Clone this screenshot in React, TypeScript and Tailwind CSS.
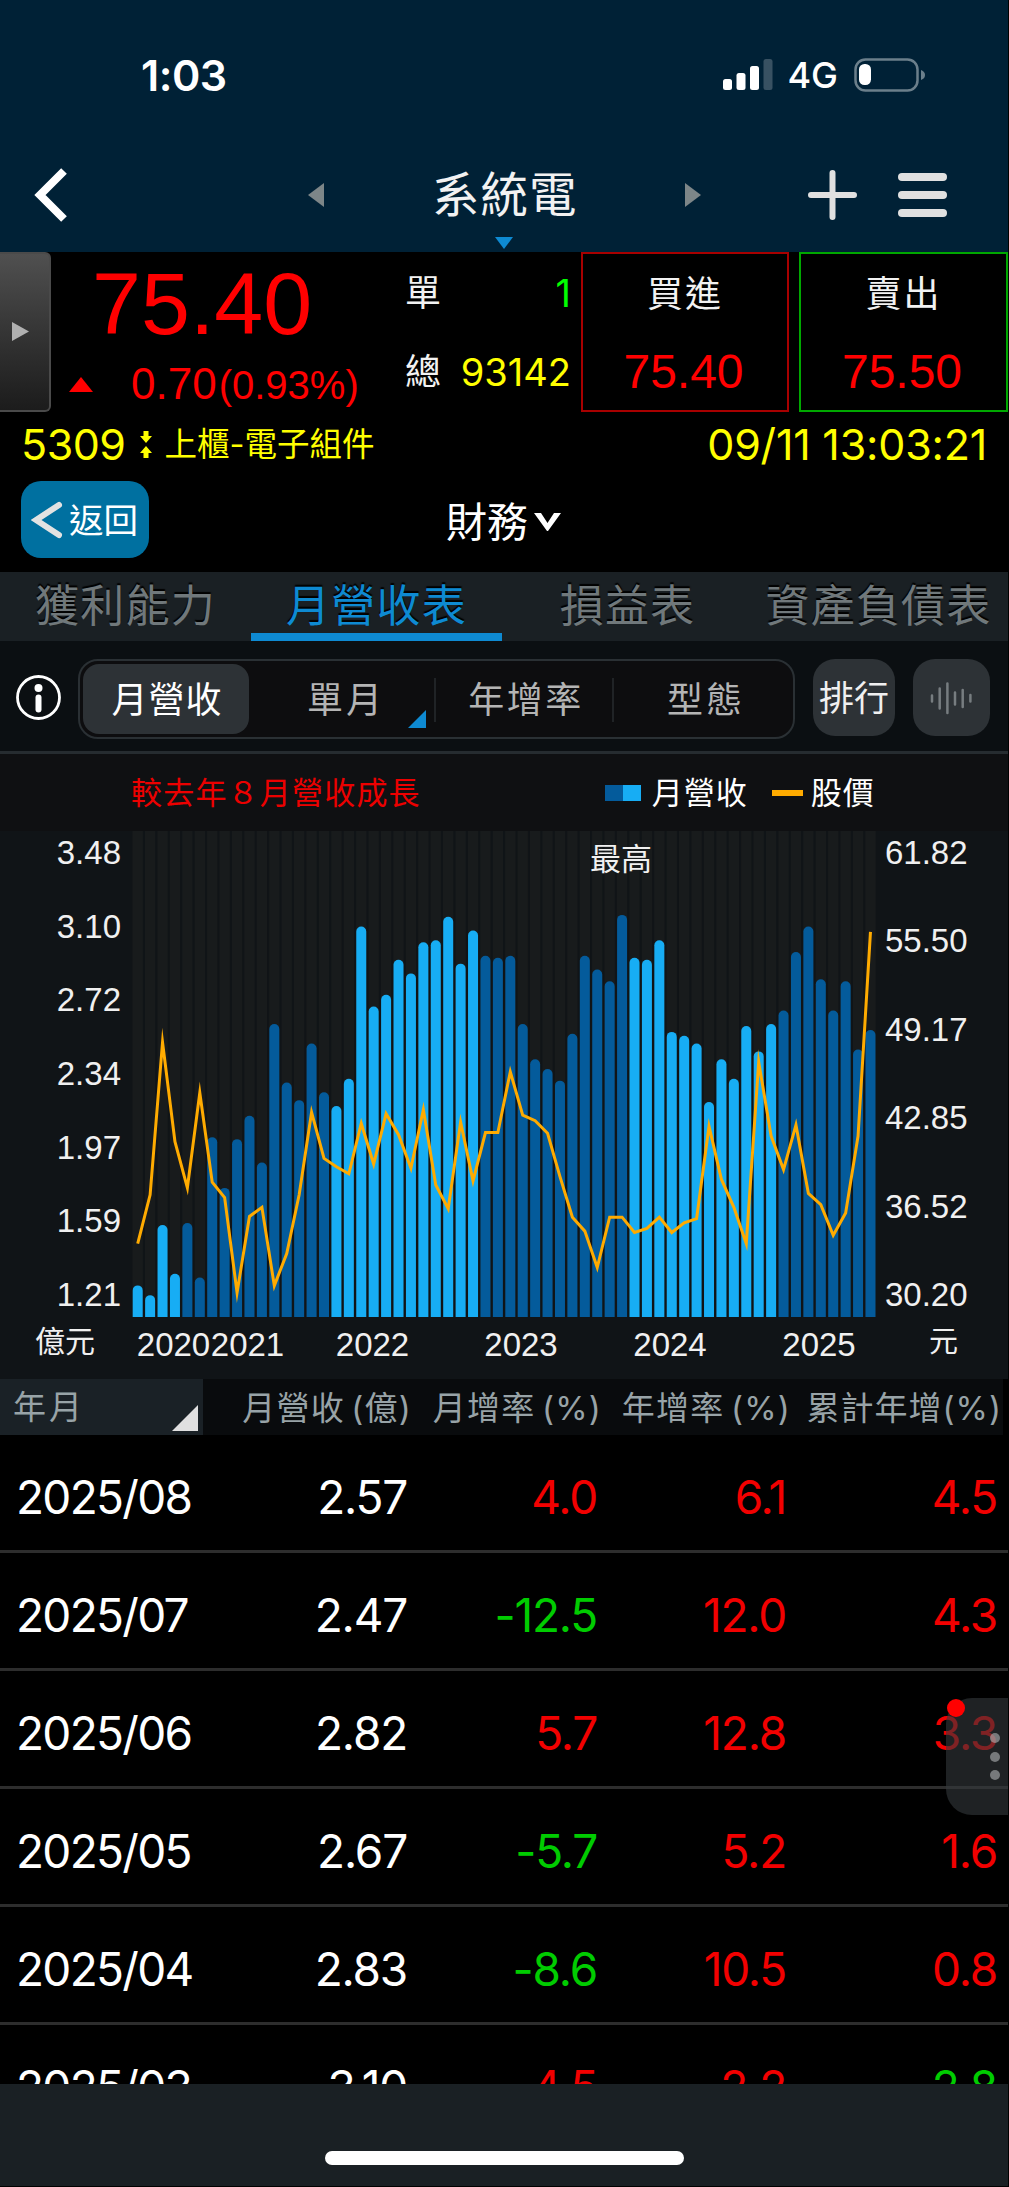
import type { ReactNode } from "react";
import clsx from "clsx";

const FIRST_YEAR_MONTH = 9; // la serie empieza en 2020/09
const REVENUE = [
  1.26, 1.21, 1.57, 1.32, 1.58, 1.3, 2.02, 1.76, 2.01, 2.13, 1.89, 2.6, 2.3, 2.21, 2.5, 2.25, 2.18,
  2.32, 3.1, 2.69, 2.75, 2.93, 2.86, 3.02, 3.03, 3.15, 2.91, 3.08, 2.95, 2.94, 2.95, 2.6, 2.42,
  2.37, 2.31, 2.55, 2.95, 2.88, 2.82, 3.16, 2.94, 2.93, 3.03, 2.56, 2.54, 2.5, 2.2, 2.42, 2.32,
  2.59, 2.46, 2.6, 2.67, 2.97, 3.1, 2.83, 2.67, 2.82, 2.47, 2.57,
];
const PRICE = [
  33.8, 37.3, 48.2, 41.1, 37.8, 44.6, 38.2, 37.1, 30.3, 35.75, 36.4, 30.8, 33.1, 37.3, 43.2, 39.9,
  39.3, 38.8, 42.4, 39.5, 43.1, 41.6, 39.2, 43.4, 38, 36.3, 42.5, 38.3, 41.75, 41.75, 46.1, 43,
  42.6, 41.7, 38.6, 35.7, 34.7, 32.1, 35.7, 35.7, 34.6, 34.9, 35.7, 34.6, 35.3, 35.6, 42.2, 38.4,
  36.4, 33.8, 46.8, 41.5, 39.1, 42.3, 37.4, 36.6, 34.4, 36, 41.5, 56.1,
];

const REVENUE_TICKS = ["3.48", "3.10", "2.72", "2.34", "1.97", "1.59", "1.21"];
const PRICE_TICKS = ["61.82", "55.50", "49.17", "42.85", "36.52", "30.20"];
const YEARS = [
  { label: "2020", x: 41.5 },
  { label: "2021", x: 115.5 },
  { label: "2022", x: 240.5 },
  { label: "2023", x: 389 },
  { label: "2024", x: 538 },
  { label: "2025", x: 687 },
];

const TABS = ["獲利能力", "月營收表", "損益表", "資產負債表"];

const ROWS = [
  { month: "2025/08", revenue: "2.57", mom: 4.0, yoy: 6.1, ytd: 4.5 },
  { month: "2025/07", revenue: "2.47", mom: -12.5, yoy: 12.0, ytd: 4.3 },
  { month: "2025/06", revenue: "2.82", mom: 5.7, yoy: 12.8, ytd: 3.3 },
  { month: "2025/05", revenue: "2.67", mom: -5.7, yoy: 5.2, ytd: 1.6 },
  { month: "2025/04", revenue: "2.83", mom: -8.6, yoy: 10.5, ytd: 0.8 },
];

function StatusBar() {
  return (
    <div className="flex h-[150px] items-center pr-[82px] pl-[141px]">
      <span className="text-[43px] leading-none font-semibold tracking-[-0.5px]">1:03</span>
      <svg className="ml-auto" width="50" height="32" viewBox="0 0 50 32" fill="#fff">
        <rect x="0" y="20" width="9" height="11" rx="2.5" />
        <rect x="13.5" y="14" width="9" height="17" rx="2.5" />
        <rect x="27" y="7" width="9" height="24" rx="2.5" />
        <rect x="40.5" y="0" width="9" height="31" rx="2.5" opacity=".22" />
      </svg>
      <span className="ml-[14px] text-[36px] leading-none font-medium">4G</span>
      <svg className="ml-[16px]" width="72" height="34" viewBox="0 0 72 34">
        <rect x="1.5" y="1.5" width="62" height="31" rx="10" fill="none" stroke="#6b7f8b" strokeWidth="2.5" />
        <rect x="5" y="6" width="12" height="21" rx="5.5" fill="#fff" />
        <path d="M67 12c3 1 4 3 4 5s-1 4-4 5z" fill="#6b7f8b" />
      </svg>
    </div>
  );
}

function NavBar() {
  return (
    <div className="relative flex h-[102px] items-center">
      <svg className="mb-[13px] ml-[34px]" width="36" height="54" viewBox="0 0 36 54" fill="none" stroke="#fff" strokeWidth="8">
        <path d="M30 3 6 27l24 24" />
      </svg>
      <svg className="mb-[13px] ml-[238px]" width="17" height="26" viewBox="0 0 17 26" fill="#7d8688">
        <path d="M16 1v24L0 13z" />
      </svg>
      <span className="mb-[13px] ml-[107px] text-[47.500px] leading-none tracking-[1px] text-[#f2f2f2]">系統電</span>
      <svg className="mb-[13px] ml-[107px]" width="17" height="26" viewBox="0 0 17 26" fill="#7d8688">
        <path d="M0 1v24l16-12z" />
      </svg>
      <svg className="mb-[13px] ml-[106px]" width="49" height="50" viewBox="0 0 49 50" stroke="#e0e0e0" strokeWidth="6" strokeLinecap="round">
        <path d="M24.500 3v44M3 25h43" />
      </svg>
      <svg className="mb-[13px] ml-[41px]" width="49" height="46" viewBox="0 0 49 46" fill="#e0e0e0">
        <rect y="1" width="49" height="8" rx="4" />
        <rect y="19" width="49" height="8" rx="4" />
        <rect y="37" width="49" height="8" rx="4" />
      </svg>
      <svg className="absolute bottom-[3px] left-[495px]" width="18" height="12" viewBox="0 0 18 12" fill="#0e8ad2">
        <path d="M0 0h18L9 12z" />
      </svg>
    </div>
  );
}

function QuoteBox({ label, value, className }: { label: string; value: string; className: string }) {
  return (
    <div className={clsx("flex h-[160px] shrink-0 flex-col items-center border-2", className)}>
      <span className="mt-[20px] text-[36px] leading-[40px] tracking-[2px] text-[#f2f2f2]">{label}</span>
      <span className="mt-[31px] mr-[3px] font-['Liberation_Sans',sans-serif] text-[48px] leading-[54px] text-[#ff0000]">
        {value}
      </span>
    </div>
  );
}

function Quote() {
  return (
    <div className="flex h-[160px]">
      <div className="flex h-[160px] w-[51px] shrink-0 items-center rounded-r-[6px] border-y-2 border-r-2 border-[#4a4a4a] bg-linear-to-b from-[#505050] to-[#1c1c1c] pl-[12px]">
        <svg width="18" height="20" viewBox="0 0 18 20" fill="#b0b0b0">
          <path d="M0 0v19l17-9.500z" />
        </svg>
      </div>
      <div className="flex w-[340px] shrink-0 flex-col font-['Liberation_Sans',sans-serif] text-[#ff0000]">
        <span className="mt-[2px] ml-[41px] text-[88px] leading-[100px]">75.40</span>
        <div className="mt-[2px] flex items-baseline">
          <svg className="mr-[38px] ml-[18px] self-center" width="24" height="16" viewBox="0 0 24 16" fill="#ff0000">
            <path d="M12 0 24 15H0z" />
          </svg>
          <span className="text-[44px] leading-[56px]">0.70</span>
          <span className="ml-[2px] text-[40px] leading-[56px]">(0.93%)</span>
        </div>
      </div>
      <div className="flex w-[190px] shrink-0 flex-col gap-[39px] pt-[21px] pr-[10px] pl-[14px] text-[36px] leading-[40px] text-[#f2f2f2]">
        <div className="flex justify-between">
          <span>單</span>
          <span className="text-[38px] text-[#00ff00]">1</span>
        </div>
        <div className="flex justify-between">
          <span>總</span>
          <span className="text-[38px] text-[#ffff00]">93142</span>
        </div>
      </div>
      <QuoteBox label="買進" value="75.40" className="w-[208px] border-[#a80000]" />
      <QuoteBox label="賣出" value="75.50" className="ml-[10px] w-[209px] border-[#00a800]" />
    </div>
  );
}

function StockInfo() {
  return (
    <div className="flex h-[65px] items-center pr-[21px] pl-[21px] text-[43px] leading-none text-[#ffff00]">
      <span className="tracking-[-0.5px]">5309</span>
      <svg className="ml-[14px]" width="12" height="28" viewBox="0 0 12 28" fill="#ffff00">
        <path d="M3.500 0h5v5H12l-6 7-6-7h3.500zM6 15l6 7H8.500v5h-5v-5H0z" />
      </svg>
      <span className="mt-[2px] ml-[13px] text-[32.500px]">上櫃-電子組件</span>
      <span className="ml-auto tracking-[-0.2px]">09/11 13:03:21</span>
    </div>
  );
}

function PageBar() {
  return (
    <div className="flex h-[95px] items-start pt-[4px] pl-[21px]">
      <button type="button" className="flex h-[77px] w-[128px] items-center rounded-[20px] bg-[#0070a0] pl-[10px]">
        <svg width="34" height="38" viewBox="0 0 34 38" fill="none" stroke="#e2e2e2" strokeWidth="6" strokeLinecap="round">
          <path d="M28 4 5 19l23 15" />
        </svg>
        <span className="mt-[3px] ml-[4px] text-[34.500px] leading-none">返回</span>
      </button>
      <div className="ml-[297px] flex h-[82px] items-center">
        <span className="text-[41px] leading-none">財務</span>
        <svg className="ml-[6px]" width="27" height="20" viewBox="0 0 27 20" fill="#fff">
          <path d="M0 1h7l6.500 10L20 1h7L14 19h-1z" />
        </svg>
      </div>
    </div>
  );
}

function Tabs() {
  return (
    <div className="flex h-[69px] bg-[#1a2024]">
      {TABS.map((tab, idx) => (
        <div
          key={tab}
          className={clsx(
            "flex w-[251px] shrink-0 justify-center border-b-[8px] text-[44px] leading-[69px] tracking-[1.200px] whitespace-nowrap [text-shadow:0_-2px_1px_#000]",
            idx === 1 ? "border-[#0e8ad2] text-[#0e8ad2]" : "border-transparent text-[#70787b]"
          )}
        >
          {tab}
        </div>
      ))}
    </div>
  );
}

function Toolbar() {
  return (
    <div className="flex h-[113px] items-start border-b-[3px] border-[#262c30] bg-[#0b0f12] pt-[18px] pl-[15px] text-[36px] leading-[72px] text-[#b4b4b4]">
      <svg className="mt-[15px]" width="47" height="47" viewBox="0 0 47 47" fill="#fff">
        <circle cx="23.500" cy="23.500" r="21" fill="none" stroke="#fff" strokeWidth="2.800" />
        <circle cx="23.500" cy="14" r="4" />
        <rect x="20.500" y="20.500" width="6" height="18" rx="3" />
      </svg>
      <div className="ml-[16px] flex h-[80px] w-[717px] rounded-[20px] border-2 border-[#2a3034] bg-[#0d0d0f] p-[3px]">
        <span className="h-[70px] w-[167px] rounded-[16px] bg-[#2d3236] pl-[2px] text-center tracking-[1px] text-white">
          月營收
        </span>
        <span className="relative w-[186px] pl-[9px] text-center tracking-[3px]">
          單月
          <svg className="absolute right-[8px] bottom-[6px]" width="18" height="18" viewBox="0 0 18 18" fill="#0e8ad2">
            <path d="M18 0v18H0z" />
          </svg>
        </span>
        <i className="mt-[14px] h-[44px] w-[2px] bg-[#202326]" />
        <span className="w-[177px] pl-[4px] text-center tracking-[2.500px]">年增率</span>
        <i className="mt-[14px] h-[44px] w-[2px] bg-[#202326]" />
        <span className="w-[177px] pl-[8px] text-center tracking-[3px]">型態</span>
      </div>
      <span className="ml-[18px] h-[77px] w-[82px] rounded-[22px] bg-[#2d3236] text-center text-[35px] leading-[78px] text-[#f0f0f0]">
        排行
      </span>
      <span className="ml-[18px] flex h-[77px] w-[77px] items-center justify-center rounded-[22px] bg-[#2d3236]">
        <svg width="43" height="34" viewBox="0 0 43 34" stroke="#777d80" strokeWidth="2.500" strokeLinecap="round">
          <path d="M2 14.500v6M9.700 7.500v20M17.400 2.500v29.500M25 11.500v12M32.700 9v17M40.400 14v6.500" />
        </svg>
      </span>
    </div>
  );
}

function ChartLegend() {
  return (
    <div className="flex h-[77px] items-center bg-[#0f1012] pl-[131px] text-[31px] leading-none">
      <span className="tracking-[1.200px] text-[#ec0000]">較去年８月營收成長</span>
      <i className="ml-[184px] h-[16px] w-[18px] bg-[#045b9b]" />
      <i className="h-[16px] w-[18px] bg-[#17adf4]" />
      <span className="ml-[11px] tracking-[1px]">月營收</span>
      <i className="ml-[24px] h-[6px] w-[31px] bg-[#ffab00]" />
      <span className="ml-[8px] tracking-[1px]">股價</span>
    </div>
  );
}

function RevenueChart() {
  const step = 12.42;
  const centerX = (i: number) => 5.7 + i * step;
  const revenueY = (v: number) => 21.5 + (3.48 - v) * 195;
  const priceY = (v: number) => 21 + (61.82 - v) * 13.98;
  const isDark = (i: number) => Math.floor((i + FIRST_YEAR_MONTH - 1) / 12) % 2 === 1;

  return (
    <div className="flex h-[548px] bg-[#101417] font-['Liberation_Sans','Noto_Sans_CJK_TC',sans-serif] text-[33px] text-[#f0f0f0]">
      <div className="flex w-[132px] flex-col pr-[11px] text-right">
        <div className="flex h-[486px] flex-col justify-between pt-[3px] pb-[3px]">
          {REVENUE_TICKS.map((t) => (
            <span key={t} className="leading-[38px]">{t}</span>
          ))}
        </div>
        <span className="mr-[26px] pt-[6px] text-[30px] leading-[38px]">億元</span>
      </div>
      <div className="w-[744px]">
        <svg width="744" height="548" viewBox="0 0 744 548">
          {REVENUE.map((v, i) => (
            <g key={i}>
              <rect x={centerX(i) - 5.2} y="0" width="10.400" height="486" fill="#181b1c" />
              <path
                d={`M${centerX(i) - 5} 486V${revenueY(v) + 5}a5 5 0 0 1 10 0V486z`}
                fill={isDark(i) ? "#045b9b" : "#17adf4"}
              />
            </g>
          ))}
          <polyline
            points={PRICE.map((v, i) => `${centerX(i)},${priceY(v)}`).join(" ")}
            fill="none"
            stroke="#ffab00"
            strokeWidth="3"
            strokeMiterlimit="20"
          />
          <text x="489" y="39" textAnchor="middle" fontSize="31" fill="#f0f0f0">最高</text>
          {YEARS.map((y) => (
            <text key={y.label} x={y.x} y="524.500" textAnchor="middle" fill="#f0f0f0">{y.label}</text>
          ))}
        </svg>
      </div>
      <div className="flex w-[132px] flex-col pl-[9px]">
        <div className="flex h-[486px] flex-col justify-between pt-[3px] pb-[3px]">
          {PRICE_TICKS.map((t) => (
            <span key={t} className="leading-[38px]">{t}</span>
          ))}
        </div>
        <span className="ml-[44px] pt-[6px] text-[29px] leading-[38px]">元</span>
      </div>
    </div>
  );
}

function HeadCell({ className, children }: { className: string; children: ReactNode }) {
  return <span className={clsx("shrink-0 text-right whitespace-nowrap", className)}>{children}</span>;
}

function Value({ value, className }: { value: number; className: string }) {
  return (
    <span className={clsx("shrink-0 text-right", value < 0 ? "text-[#00cc00]" : "text-[#f20000]", className)}>
      {value.toFixed(1)}
    </span>
  );
}

function RevenueTable() {
  return (
    <div>
      <div className="mr-[5px] flex h-[56px] bg-[#090b0d] text-[33px] leading-[58px] tracking-[1.200px] text-[#98a3a7] [word-spacing:-4px]">
        <div className="flex w-[203px] shrink-0 items-end justify-between bg-[#1a2126] pr-[5px] pl-[13px]">
          <span className="leading-[56px] tracking-[3px]">年月</span>
          <svg className="mb-[4px]" width="26" height="26" viewBox="0 0 26 26" fill="#e0e0e0">
            <path d="M26 0v26H0z" />
          </svg>
        </div>
        <HeadCell className="w-[209px]">月營收 (億)</HeadCell>
        <HeadCell className="w-[190px]">月增率 (%)</HeadCell>
        <HeadCell className="w-[189px]">年增率 (%)</HeadCell>
        <HeadCell className="w-[211px] tracking-[1px]">累計年增(%)</HeadCell>
      </div>
      <div className="h-[649px] overflow-hidden text-[46px] leading-[124px] tracking-[-1.200px]">
        {ROWS.map((row) => (
          <div key={row.month} className="flex h-[118px] border-b-[3px] border-[#2d2d2d] pl-[16px]">
            <span className="w-[220px] shrink-0 tracking-[-1.700px]">{row.month}</span>
            <span className="w-[171px] shrink-0 text-right">{row.revenue}</span>
            <Value value={row.mom} className="w-[190px]" />
            <Value value={row.yoy} className="w-[189px]" />
            <Value value={row.ytd} className="w-[211px]" />
          </div>
        ))}
        <div className="flex h-[118px] pl-[16px]">
          <span className="w-[220px] shrink-0 tracking-[-1.700px]">2025/03</span>
          <span className="w-[171px] shrink-0 text-right">3.10</span>
          <span className="w-[190px] shrink-0 text-right text-[#f20000]">4.5</span>
          <span className="w-[189px] shrink-0 text-right text-[#f20000]">2.2</span>
          <span className="w-[211px] shrink-0 text-right text-[#00cc00]">2.8</span>
        </div>
      </div>
    </div>
  );
}

function FloatingHandle() {
  return (
    <div className="absolute top-[1698px] right-px flex h-[117px] w-[62px] flex-col items-end justify-center gap-[8.500px] rounded-l-[26px] bg-[#34393c]/60 pr-[8px]">
      <i className="absolute top-[1px] left-[1px] size-[18px] rounded-full bg-[#ff0000]" />
      <i className="size-[10px] rounded-full bg-[#b0b4b5]/60" />
      <i className="size-[10px] rounded-full bg-[#b0b4b5]/60" />
      <i className="size-[10px] rounded-full bg-[#b0b4b5]/60" />
    </div>
  );
}

export default function App() {
  return (
    <div className="relative h-[2187px] w-[1009px] overflow-hidden bg-black font-[Inter,'Noto_Sans_CJK_TC',sans-serif] text-white">
      <div className="mr-px">
        <header className="h-[252px] bg-[#002136]">
          <StatusBar />
          <NavBar />
        </header>
        <Quote />
        <StockInfo />
        <PageBar />
        <Tabs />
        <Toolbar />
        <ChartLegend />
        <RevenueChart />
        <RevenueTable />
        <footer className="flex h-[102px] justify-center bg-[#1a2024] pt-[67px]">
          <i className="h-[14px] w-[359px] rounded-full bg-white" />
        </footer>
      </div>
      <FloatingHandle />
    </div>
  );
}
